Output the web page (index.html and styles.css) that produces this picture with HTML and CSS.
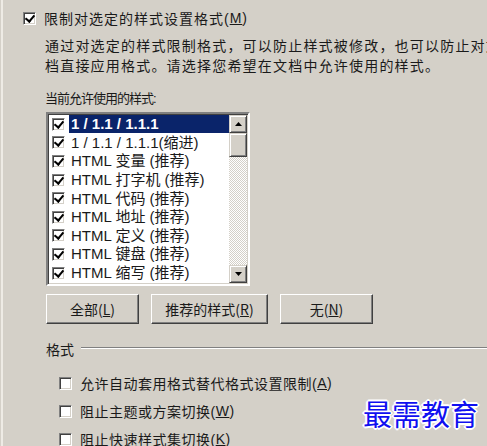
FILE: index.html
```html
<!DOCTYPE html>
<html>
	<head>
		<meta charset="utf-8">
		<title>限制格式</title>
		<link rel="stylesheet" href="styles.css">
	</head>
	<body>
		<div class="pane">
			<label class="check title"><span class="box on"></span>限制对选定的样式设置格式(<u>M</u>)</label>
			<div class="indent">
				<p class="desc">通过对选定的样式限制格式，可以防止样式被修改，也可以防止对文<br>档直接应用格式。请选择您希望在文档中允许使用的样式。</p>
				<div class="caption">当前允许使用的样式:</div>
				<div class="listbox">
					<ul class="items">
						<li class="sel"><span class="box on"></span><span class="txt">1 / 1.1 / 1.1.1</span></li>
						<li><span class="box on"></span><span class="txt">1 / 1.1 / 1.1.1(缩进)</span></li>
						<li><span class="box on"></span><span class="txt">HTML 变量 (推荐)</span></li>
						<li><span class="box on"></span><span class="txt">HTML 打字机 (推荐)</span></li>
						<li><span class="box on"></span><span class="txt">HTML 代码 (推荐)</span></li>
						<li><span class="box on"></span><span class="txt">HTML 地址 (推荐)</span></li>
						<li><span class="box on"></span><span class="txt">HTML 定义 (推荐)</span></li>
						<li><span class="box on"></span><span class="txt">HTML 键盘 (推荐)</span></li>
						<li><span class="box on"></span><span class="txt">HTML 缩写 (推荐)</span></li>
					</ul>
					<div class="scrollbar">
						<div class="sbtn"><svg width="7" height="4" viewBox="0 0 7 4"><path d="M3.5 0 L7 4 L0 4 Z" fill="#000"/></svg></div>
						<div class="thumb"></div>
						<div class="track"></div>
						<div class="sbtn"><svg width="7" height="4" viewBox="0 0 7 4"><path d="M0 0 L7 0 L3.5 4 Z" fill="#000"/></svg></div>
					</div>
				</div>
				<div class="buttons">
					<button class="btn w93">全部(<u>L</u>)</button>
					<button class="btn w117">推荐的样式(<u>R</u>)</button>
					<button class="btn w93">无(<u>N</u>)</button>
				</div>
				<div class="group"><span>格式</span><div class="etch"></div></div>
				<div class="options">
					<label class="check opt"><span class="box"></span>允许自动套用格式替代格式设置限制(<u>A</u>)</label>
					<label class="check opt"><span class="box"></span>阻止主题或方案切换(<u>W</u>)</label>
					<label class="check opt"><span class="box"></span>阻止快速样式集切换(<u>K</u>)</label>
				</div>
			</div>
		</div>
		<div class="watermark">最需教育</div>
	</body>
</html>
```

FILE: styles.css
```css
html, body {
	margin: 0;
	height: 100%;
	overflow: hidden;
}

body {
	background: #d4d0c8;
	color: #1a1a1a;
	font-family: "Liberation Sans", "Noto Sans CJK SC", sans-serif;
	font-size: 14px;
	position: relative;
}

.pane {
	height: 100%;
	margin-left: 1px;
	border-left: 2px solid #eeebe5;
	padding-top: 8px;
}

.check {
	display: flex;
	align-items: center;
	height: 20px;
	white-space: nowrap;
}

.box {
	width: 11px;
	height: 11px;
	background: #fff;
	border: 1px solid;
	border-color: #808080 #fff #fff #808080;
	box-shadow: inset 1px 1px #404040, inset -1px -1px #d4d0c8;
	flex: none;
	position: relative;
}

.box.on::after {
	content: "";
	position: absolute;
	left: 3px;
	top: 0;
	width: 4px;
	height: 7px;
	border: solid #000;
	border-width: 0 2.5px 2.5px 0;
	transform: rotate(40deg);
}

.title {
	padding-left: 20px;
	letter-spacing: 1px;
}

.title .box {
	margin-right: 8px;
}

.indent {
	padding-left: 42px;
}

.desc {
	margin: 8px 0 0;
	line-height: 20px;
	white-space: nowrap;
	letter-spacing: 1.2px;
}

.caption {
	margin-top: 13px;
	line-height: 20px;
	font-size: 13px;
	letter-spacing: -1px;
}

.listbox {
	margin-top: 3px;
	margin-left: 1px;
	width: 198px;
	height: 168px;
	background: #fff;
	border: 2px solid;
	border-color: #808080 #fff #fff #808080;
	box-shadow: inset 1px 1px #404040, inset -1px -1px #d4d0c8;
	display: flex;
	padding: 1px;
	box-sizing: content-box;
}

.items {
	list-style: none;
	margin: 0;
	padding: 0;
	flex: 1;
	overflow: hidden;
}

.items li {
	display: flex;
	align-items: center;
	height: 18.6px;
	font-size: 15px;
	white-space: nowrap;
	padding-left: 3px;
}

.items .box {
	margin-right: 4px;
}

.items .txt {
	flex: 1;
	padding-left: 2px;
	line-height: 18px;
}

.items .sel .txt {
	background: #0a246a;
	color: #fff;
	font-weight: bold;
}

.scrollbar {
	width: 18px;
	display: flex;
	flex-direction: column;
}

.sbtn, .thumb {
	background: #d4d0c8;
	border: 1px solid;
	border-color: #d4d0c8 #404040 #404040 #d4d0c8;
	box-shadow: inset 1px 1px #fff, inset -1px -1px #808080;
	box-sizing: border-box;
}

.sbtn {
	height: 18px;
	display: flex;
	align-items: center;
	justify-content: center;
}

.thumb {
	height: 24px;
}

.track {
	flex: 1;
	background: repeating-conic-gradient(#fff 0 25%, #d4d0c8 0 50%) 0 0 / 2px 2px;
}

.buttons {
	display: flex;
	gap: 12px;
	margin-top: 8px;
	margin-left: 1px;
}

.btn {
	height: 30px;
	background: #d4d0c8;
	font-family: "Noto Sans CJK SC", sans-serif;
	font-size: 14px;
	color: #1a1a1a;
	border: 1px solid;
	border-color: #fff #404040 #404040 #fff;
	box-shadow: inset -1px -1px #808080;
	padding: 0;
}

.w93 {
	width: 93px;
}

.w117 {
	width: 117px;
}

.group {
	display: flex;
	align-items: center;
	margin-top: 15px;
	height: 20px;
	margin-left: 1px;
}

.etch {
	flex: 1;
	height: 0;
	border-top: 1px solid #808080;
	border-bottom: 1px solid #fff;
	margin-left: 7px;
	margin-top: -2px;
}

.options {
	margin-top: 10px;
}

.opt {
	height: 28px;
	padding-left: 14px;
	letter-spacing: 0.5px;
}

.opt .box {
	margin-right: 8px;
}

.watermark {
	position: absolute;
	left: 363px;
	top: 392px;
	font-family: "Noto Sans CJK SC", sans-serif;
	font-size: 29px;
	color: #1010f0;
	text-shadow: 2px 0 #fff, -2px 0 #fff, 0 2px #fff, 0 -2px #fff, 1px 1px #fff, -1px -1px #fff, 1px -1px #fff, -1px 1px #fff;
}
```
